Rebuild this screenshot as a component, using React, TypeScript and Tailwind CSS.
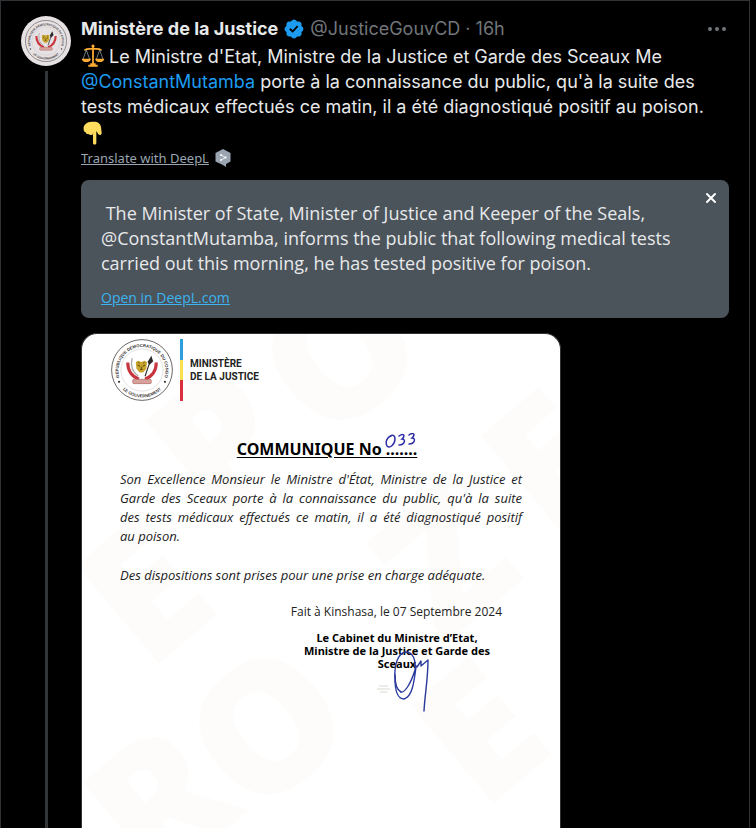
import { useState } from "react";
import { MoreHorizontal, X } from "lucide-react";

// Round seal of the government, used for the avatar and the letterhead
function Seal({ id, className }: { id: string; className?: string }) {
  return (
    <svg viewBox="0 0 100 100" className={className} role="img" aria-label="République Démocratique du Congo">
      <defs>
        <path id={`${id}-top`} d="M14 63 A38 38 0 1 1 86 63" />
        <path id={`${id}-bottom`} d="M10 68.5 A44 44 0 0 0 90 68.5" />
      </defs>
      <circle cx="50" cy="50" r="49" fill="none" stroke="#55504f" strokeWidth="1.4" />
      <circle cx="50" cy="50" r="34" fill="none" stroke="#b5b0ae" strokeWidth="0.6" />
      <text fontSize="6.8" fontWeight="700" fill="#3c3838" className="font-['Liberation_Sans',sans-serif]">
        <textPath href={`#${id}-top`} startOffset="50%" textAnchor="middle">RÉPUBLIQUE DÉMOCRATIQUE DU CONGO</textPath>
      </text>
      <text fontSize="6.8" fontWeight="700" fill="#3c3838" className="font-['Liberation_Sans',sans-serif]">
        <textPath href={`#${id}-bottom`} startOffset="50%" textAnchor="middle">LE GOUVERNEMENT</textPath>
      </text>
      <circle cx="13" cy="69" r="1.8" fill="#3c3838" />
      <circle cx="87" cy="69" r="1.8" fill="#3c3838" />
      {/* palm and tusks */}
      <path d="M27 38 C27 51 33 60 45 65" fill="none" stroke="#c9353f" strokeWidth="5" />
      <path d="M73 38 C73 51 67 60 55 65" fill="none" stroke="#c9353f" strokeWidth="5" />
      <path d="M34 31 C31 45 35 54 44 60" fill="none" stroke="#a9a6a4" strokeWidth="2" />
      {/* spear */}
      <path d="M63 36 L55 60" stroke="#2e2a2a" strokeWidth="1.8" />
      <path d="M65 27 L68 36 L62 42 L59 37 Z" fill="#2e2a2a" />
      {/* leopard head */}
      <path d="M40 37 L44 35 L49 37 L54 35 L58 37 L57 48 L52 54 H46 L41 48 Z" fill="#c9a52c" />
      <path d="M43 42 L47 44 M55 42 L51 44 M47 49 H51 M49 45 V48 M44 38 L46 39 M54 38 L52 39" stroke="#4d3a10" strokeWidth="1.5" />
      {/* stone */}
      <rect x="35" y="65" width="30" height="7" rx="2" fill="#d9a19c" stroke="#a8605c" strokeWidth="1" />
    </svg>
  );
}

function VerifiedBadge() {
  return (
    <svg viewBox="0 0 22 22" className="size-[22px] shrink-0" role="img" aria-label="Verified account">
      <path
        fill="#1d9bf0"
        d="M20.396 11c-.018-.646-.215-1.275-.57-1.816-.354-.54-.852-.972-1.438-1.246.223-.607.27-1.264.14-1.897-.131-.634-.437-1.218-.882-1.687-.47-.445-1.053-.75-1.687-.882-.633-.13-1.29-.083-1.897.14-.273-.587-.704-1.086-1.245-1.44S11.647 1.62 11 1.604c-.646.017-1.273.213-1.813.568s-.969.854-1.24 1.44c-.608-.223-1.267-.272-1.902-.14-.635.13-1.22.436-1.69.882-.445.47-.749 1.055-.878 1.688-.13.633-.08 1.29.144 1.896-.587.274-1.087.705-1.443 1.245-.356.54-.555 1.17-.574 1.817.02.647.218 1.276.574 1.817.356.54.856.972 1.443 1.245-.224.606-.274 1.263-.144 1.896.13.634.433 1.218.877 1.688.47.443 1.054.747 1.687.878.633.132 1.29.084 1.897-.136.274.586.705 1.084 1.246 1.439.54.354 1.17.551 1.816.569.647-.016 1.276-.213 1.817-.567s.972-.854 1.245-1.44c.604.239 1.266.296 1.903.164.636-.132 1.22-.447 1.68-.907.46-.46.776-1.044.908-1.681s.075-1.299-.165-1.903c.586-.274 1.084-.705 1.439-1.246.354-.54.551-1.17.569-1.816z"
      />
      <path fill="#000" d="M9.662 14.85l-3.429-3.428 1.293-1.302 2.072 2.072 4.4-4.794 1.347 1.246z" />
    </svg>
  );
}

function ScalesEmoji() {
  return (
    <svg viewBox="0 0 36 36" className="mr-1 inline-block size-6 align-[-5px]" role="img" aria-label="Scales">
      <g fill="none" stroke="#ffac33" strokeLinecap="round">
        <path d="M6 9 C10 6 13 8 18 7 C23 8 26 6 30 9" strokeWidth="2.4" />
        <path d="M18 4 V32" strokeWidth="2.6" />
      </g>
      <path d="M8 9 L3 23 M8 9 L13 23 M28 9 L23 23 M28 9 L33 23" stroke="#8899a6" strokeWidth="1.2" />
      <circle cx="18" cy="3" r="2.4" fill="#ffac33" />
      <path d="M1 22 H15 C14 26 11 27 8 27 S2 26 1 22 Z M21 22 H35 C34 26 31 27 28 27 S22 26 21 22 Z" fill="#ffac33" />
      <path d="M14 29 H22 V31 H25 V34 H11 V31 H14 Z" fill="#ffac33" />
    </svg>
  );
}

function PointDownEmoji() {
  return (
    <svg viewBox="0 0 36 36" className="block size-6" role="img" aria-label="Pointing down">
      <path
        d="M4 12 C3 6 9 1 16 1 H19 C26 1 29 4 30 9 L31 18 C31 21 28 22 26 20 L23 15 V33 C23 36 18 36 18 33 V20 C16 22 13 21 12 20 C9 20 7 19 7 17 C4 16 4 14 4 12 Z"
        fill="#ffdc5d"
      />
      <path d="M18 20 V17" fill="none" stroke="#ef9645" strokeWidth="1" />
    </svg>
  );
}

function DeepLIcon() {
  return (
    <svg viewBox="0 0 16 18" className="h-[18px] w-4" aria-hidden="true">
      <path d="M8 0 L15.5 4 V12.5 L11 15 V18 L8 16 L0.5 12.5 V4 Z" fill="#9aa5b1" />
      <path d="M6 6 L10.5 8.5 L6 11" fill="none" stroke="#fff" strokeWidth="0.8" />
      <circle cx="6" cy="6" r="1" fill="#fff" />
      <circle cx="10.5" cy="8.5" r="1.1" fill="#fff" />
      <circle cx="6" cy="11" r="1" fill="#fff" />
    </svg>
  );
}

// Faint oversized lettering behind the letter
const watermarkLetters = [
  { char: "P", x: 140, y: 110 },
  { char: "O", x: 260, y: 20 },
  { char: "E", x: 65, y: 260 },
  { char: "Z", x: 365, y: 230 },
  { char: "E", x: 470, y: 130 },
  { char: "R", x: 80, y: 470 },
  { char: "O", x: 187, y: 395 },
  { char: "E", x: 400, y: 400 },
];

function Watermark() {
  return (
    <svg
      viewBox="0 0 480 495"
      preserveAspectRatio="xMidYMin slice"
      className="absolute inset-0 size-full font-['Open_Sans',sans-serif]"
      aria-hidden="true"
    >
      <g fill="#fdfcfb" fontSize="180" fontWeight="800" textAnchor="middle">
        {watermarkLetters.map(({ char, x, y }) => (
          <text key={`${x}-${y}`} transform={`translate(${x} ${y}) rotate(-40)`} dy="62">
            {char}
          </text>
        ))}
      </g>
    </svg>
  );
}

function Signature() {
  return (
    <svg viewBox="0 0 60 64" className="absolute top-5 left-[73px] h-16 w-[60px]" aria-hidden="true">
      <g fill="none" stroke="#2a3a9c" strokeWidth="1.4" strokeLinecap="round" strokeLinejoin="round">
        <path d="M24 41 C28 42 34 32 38 19 C39 9 36 1 29 1 C21 2 17 13 18 28 C18 40 21 48 27 48 C35 46 37 32 39 16" />
        <path d="M18 24 C18 34 20 39 24 41" />
        <path d="M38 14 L40 16 L44 10 L44 15 L51 9 C51 28 48 42 47 60" />
      </g>
      <path d="M2 35 L11 35 M0 38 L13 38 M3 41 L10 41" stroke="#d4d4cc" strokeWidth="0.9" />
    </svg>
  );
}

// Full lines of the statement, each one set to the whole measure
const statementLines = [
  "Son Excellence Monsieur le Ministre d'État, Ministre de la Justice et",
  "Garde des Sceaux porte à la connaissance du public, qu'à la suite",
  "des tests médicaux effectués ce matin, il a été diagnostiqué positif",
];

function Communique() {
  return (
    <article className="relative flex w-full max-w-[480px] flex-1 flex-col overflow-hidden rounded-t-2xl border border-b-0 border-[#2f3336] bg-white text-[#222]">
      <Watermark />
      <div className="relative px-[29px] pt-[5px]">
        <header className="flex items-center gap-[7px]">
          <Seal id="letterhead" className="size-[62px]" />
          <div className="flex h-[62px] w-[3px] flex-col">
            <span className="flex-1 bg-[#2d9fdc]" />
            <span className="flex-1 bg-[#f6e04d]" />
            <span className="flex-1 bg-[#d8303c]" />
          </div>
          <p className="font-['Roboto',sans-serif] text-[10px] leading-[13px] font-bold">
            MINISTÈRE
            <br />
            DE LA JUSTICE
          </p>
        </header>
      </div>

      <div className="relative px-[38px] pt-9">
        <h2 className="pl-3 text-center font-['Noto_Sans',sans-serif] text-base leading-6 font-bold text-black">
          <span className="relative inline-block underline underline-offset-2">
            COMMUNIQUE No .......
            <svg viewBox="0 0 32 16" className="absolute right-0 -top-1 h-4 w-8" role="img" aria-label="033">
              <g fill="none" stroke="#2f2fa8" strokeWidth="1.5" strokeLinecap="round">
                <path d="M6 3 C2 4 0 9 2 13 C5 16 10 11 10 6 C10 2 7 1 4 4" />
                <path d="M14 3 C18 0 21 2 17 6 C21 6 20 12 14 12" />
                <path d="M24 2 C28 -1 31 1 27 5 C31 5 30 11 24 11" />
              </g>
            </svg>
          </span>
        </h2>

        <div className="mt-[9px] flex flex-col gap-5 font-['Open_Sans',sans-serif] text-[13px] leading-[19px] font-medium italic">
          <p>
            {statementLines.map((line) => (
              <span key={line} className="block text-justify [text-align-last:justify]">
                {line}{" "}
              </span>
            ))}
            au poison.
          </p>
          <p>Des dispositions sont prises pour une prise en charge adéquate.</p>
        </div>

        <p className="mt-[17px] mr-5 text-right font-['Open_Sans',sans-serif] text-xs leading-5">
          Fait à Kinshasa, le 07 Septembre 2024
        </p>

        <div className="relative mt-[9px] mr-8 ml-auto w-[186px] text-center font-['Noto_Sans',sans-serif] text-[11px] leading-[13px] font-bold text-black">
          <p>
            Le Cabinet du Ministre d’Etat,
            <br />
            Ministre de la Justice et Garde des
            <br />
            Sceaux
          </p>
          <Signature />
        </div>
      </div>
    </article>
  );
}

export default function App() {
  const [showTranslation, setShowTranslation] = useState(true);

  return (
    <div className="min-h-screen bg-black pr-[6px]">
      <main className="flex min-h-screen gap-[10px] border border-b-0 border-[#2f3336] px-5 pt-[15px] font-['Inter',sans-serif] text-[#e7e9ea]">
        <div className="flex flex-col items-center gap-[5px]">
          <a href="#profile" className="block size-[50px] rounded-full bg-[#e6e1e3] p-1">
            <Seal id="avatar" className="size-full" />
          </a>
          <div className="w-[3px] flex-1 bg-[#333639]" />
        </div>

        <div className="flex min-w-0 flex-1 flex-col">
          <div className="flex h-[25px] items-center text-lg leading-[25px]">
            <a href="#profile" className="font-bold">Ministère de la Justice</a>
            <span className="mx-[5px] flex">
              <VerifiedBadge />
            </span>
            <span className="text-[#71767b]">@JusticeGouvCD · 16h</span>
            <button aria-label="More" className="ml-auto text-[#71767b]">
              <MoreHorizontal className="size-6" />
            </button>
          </div>

          <div className="mt-[3px] text-lg leading-[25px]">
            <p>
              <ScalesEmoji />
              Le Ministre d'Etat, Ministre de la Justice et Garde des Sceaux Me{" "}
              <br />
              <a href="#mention" className="text-[#1d9bf0]">@ConstantMutamba</a> porte à la connaissance du public,
              qu'à la suite des
              <br />
              tests médicaux effectués ce matin, il a été diagnostiqué positif au poison.
            </p>
            <div className="pt-[2px]">
              <PointDownEmoji />
            </div>
          </div>

          <button
            onClick={() => setShowTranslation(true)}
            className="mt-[3px] flex items-center gap-[6px] self-start font-['Noto_Sans',sans-serif] text-[13px] leading-5 text-[#9aa5b1]"
          >
            <span className="underline">Translate with DeepL</span>
            <DeepLIcon />
          </button>

          {showTranslation && (
            <section className="relative mt-3 rounded-lg bg-[#4b535b] px-5 pt-[21px] pb-[9px] font-['Open_Sans',sans-serif]">
              <button
                aria-label="Close"
                onClick={() => setShowTranslation(false)}
                className="absolute top-[10px] right-[10px] text-white"
              >
                <X className="size-4" strokeWidth={3} />
              </button>
              <p className="text-lg leading-[25px]">
                &nbsp;The Minister of State, Minister of Justice and Keeper of the Seals,
                <br />
                @ConstantMutamba, informs the public that following medical tests
                <br />
                carried out this morning, he has tested positive for poison.
              </p>
              <a href="#deepl" className="mt-3 inline-block text-sm leading-5 text-[#3cb4f0] underline">
                Open in DeepL.com
              </a>
            </section>
          )}

          <div className="mt-[15px] flex flex-1 flex-col">
            <Communique />
          </div>
        </div>
      </main>
    </div>
  );
}
